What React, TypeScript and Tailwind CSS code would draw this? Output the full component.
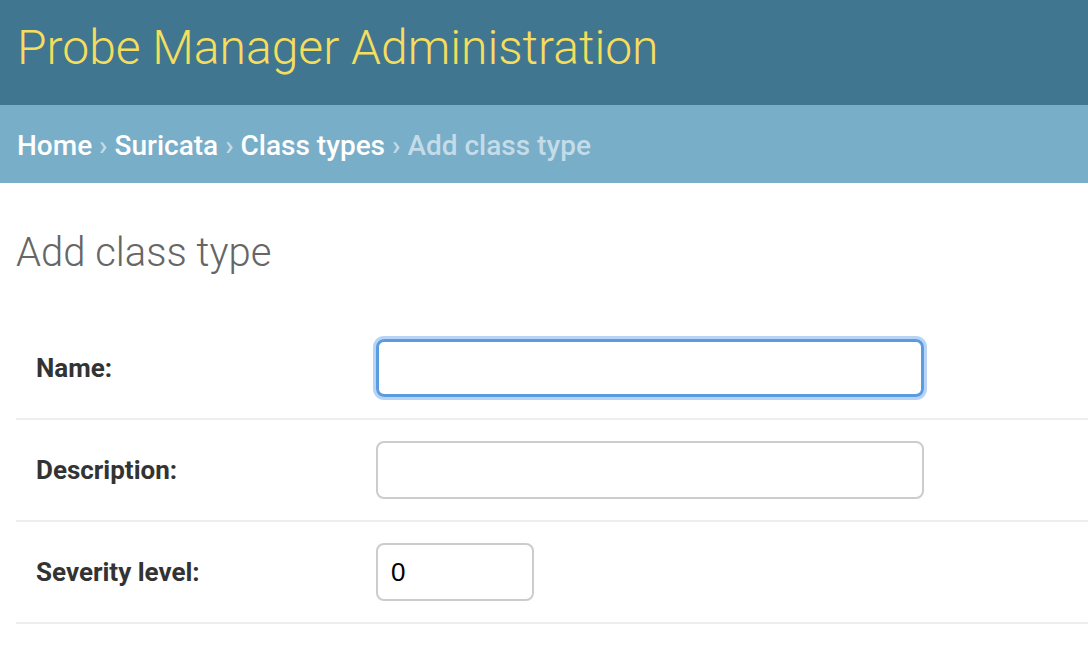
import React from "react";

// one form row: label + input
const Row = ({ label, inputClass, value, focused }: { label: string; inputClass: string; value?: string; focused?: boolean }) => {
  return (
    <div className="flex items-center py-[21px] pl-[20px] border-b-2 border-[#eeeeee]">
      <label className="w-[340px] text-[26px] font-bold text-[#333333]">{label}</label>
      <input
        type="text"
        defaultValue={value}
        className={`${inputClass} h-[58px] rounded-[8px] px-[13px] text-[26px] text-black outline-none font-['Liberation_Sans',sans-serif] ${
          focused ? "border-[3px] border-[#5b9be0] shadow-[0_0_0_3px_#b7d4f6]" : "border-2 border-[#cccccc]"
        }`}
      />
    </div>
  );
};

export default function App() {
  return (
    <div className="w-[1088px] h-[648px] overflow-hidden bg-white font-['Roboto',sans-serif]">
      {/* header */}
      <div className="h-[105px] bg-[#417690] pt-[20px] pl-[17px]">
        <h1 className="text-[48px] leading-[56px] font-light text-[#f5dd5d]">Probe Manager Administration</h1>
      </div>

      {/* breadcrumbs */}
      <div className="h-[78px] bg-[#79aec8] pt-[24px] pl-[17px] text-[28px] leading-[33px] font-medium text-[#c4dce8]">
        <span className="text-white">Home</span> › <span className="text-white">Suricata</span> ›{" "}
        <span className="text-white">Class types</span> › Add class type
      </div>

      {/* content */}
      <div className="pl-[16px]">
        <h2 className="mt-[46px] text-[40px] leading-[47px] font-light text-[#666666]">Add class type</h2>
        <div className="mt-[42px]">
          <Row label="Name:" inputClass="w-[548px]" focused />
          <Row label="Description:" inputClass="w-[548px]" />
          <Row label="Severity level:" inputClass="w-[158px]" value="0" />
        </div>
      </div>
    </div>
  );
}
